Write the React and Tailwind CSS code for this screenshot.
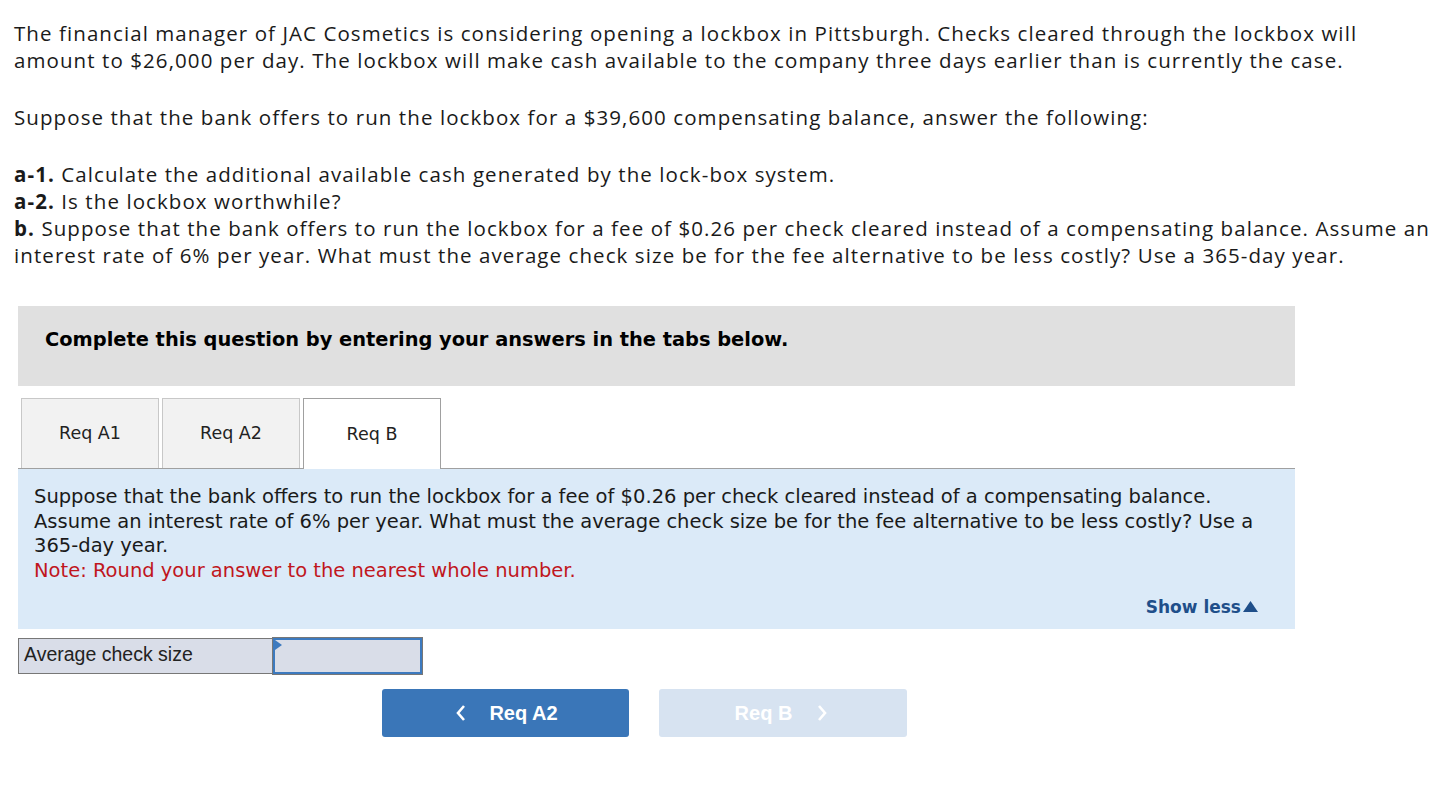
export default function App() {
  const intro = "font-['Open_Sans','Liberation_Sans',sans-serif] text-[20.5px] leading-[27px] tracking-[1.08px] text-[#1a1a1a]"
  return (
    <div className="min-h-screen bg-white">
      <div className="pl-[14px] pt-[20px] pr-4">
        <div className={intro}>
          <p className="whitespace-nowrap">
            The financial manager of JAC Cosmetics is considering opening a lockbox in Pittsburgh. Checks cleared through the lockbox will
            <br />
            amount to $26,000 per day. The lockbox will make cash available to the company three days earlier than is currently the case.
          </p>
          <p className="mt-[30px] whitespace-nowrap">
            Suppose that the bank offers to run the lockbox for a $39,600 compensating balance, answer the following:
          </p>
          <p className="mt-[30px] whitespace-nowrap">
            <b>a-1.</b> Calculate the additional available cash generated by the lock-box system.
            <br />
            <b>a-2.</b> Is the lockbox worthwhile?
            <br />
            <b>b.</b> Suppose that the bank offers to run the lockbox for a fee of $0.26 per check cleared instead of a compensating balance. Assume an
            <br />
            interest rate of 6% per year. What must the average check size be for the fee alternative to be less costly? Use a 365-day year.
          </p>
        </div>
      </div>

      <div className="ml-[18px] w-[1277px] mt-[37px]">
        <div className="bg-[#e0e0e0] h-[80px] pl-[27px] pt-[21px]">
          <p className="font-['DejaVu_Sans',sans-serif] font-bold text-[19.4px] leading-[26px] text-black">
            Complete this question by entering your answers in the tabs below.
          </p>
        </div>

        <div className="mt-[12px] flex items-end gap-[3px] pl-[3px] border-b border-[#a0a0a0] font-['DejaVu_Sans',sans-serif] text-[17.5px] text-[#222]">
          <button className="w-[138px] h-[70px] bg-[#f2f2f2] border border-b-0 border-[#c8c8c8]">Req A1</button>
          <button className="w-[138px] h-[70px] bg-[#f2f2f2] border border-b-0 border-[#c8c8c8]">Req A2</button>
          <button className="w-[138px] h-[71px] -mb-px bg-white border border-b-0 border-[#a0a0a0]">Req B</button>
        </div>

        <div className="bg-[#dbeaf8] h-[160px] pl-[16px] pr-[30px] pt-[16px] relative font-['DejaVu_Sans',sans-serif] text-[19.5px] leading-[24.5px] text-[#1a1a1a]">
          <p className="whitespace-nowrap">
            Suppose that the bank offers to run the lockbox for a fee of $0.26 per check cleared instead of a compensating balance.
            <br />
            Assume an interest rate of 6% per year. What must the average check size be for the fee alternative to be less costly? Use a
            <br />
            365-day year.
          </p>
          <p className="text-[#c0161d]">Note: Round your answer to the nearest whole number.</p>
          <div className="absolute right-[36px] bottom-[10px] flex items-center gap-[1px] text-[17px] font-bold text-[#1f4f8a]">
            Show less
            <svg width="17" height="13" viewBox="0 0 17 13"><path d="M8.5 1 L16 12 L1 12 Z" fill="#1f4f8a" /></svg>
          </div>
        </div>
      </div>

      <div className="ml-[18px] mt-[9px] flex h-[36px]">
        <div className="w-[255px] bg-[#d9dde8] border border-[#777] flex items-center pl-[5px] pb-[2px] font-['Liberation_Sans',sans-serif] text-[19.5px] text-[#222]">
          Average check size
        </div>
        <div className="relative w-[149px] bg-[#d9dde8] border-2 border-[#3d7abf] outline outline-1 outline-[#777]">
          <svg className="absolute left-0 top-0" width="8" height="10" viewBox="0 0 8 10"><path d="M0 0 L7 5 L0 10 Z" fill="#3d7abf" /></svg>
        </div>
      </div>

      <div className="mt-[15px] flex gap-[30px] pl-[382px] font-['Liberation_Sans',sans-serif] font-bold text-[20px]">
        <button className="w-[247px] h-[48px] rounded-[3px] bg-[#3a76b8] text-white flex items-center justify-center gap-[22px] pl-[2px]">
          <svg width="12" height="18" viewBox="0 0 12 18"><path d="M9 2 L3 9 L9 16" stroke="white" strokeWidth="2.6" fill="none" /></svg>
          Req A2
        </button>
        <button className="w-[248px] h-[48px] rounded-[3px] bg-[#d7e3f1] text-white flex items-center justify-center gap-[24px] pr-[3px]">
          Req B
          <svg width="12" height="18" viewBox="0 0 12 18"><path d="M3 2 L9 9 L3 16" stroke="white" strokeWidth="2.6" fill="none" /></svg>
        </button>
      </div>
    </div>
  )
}
